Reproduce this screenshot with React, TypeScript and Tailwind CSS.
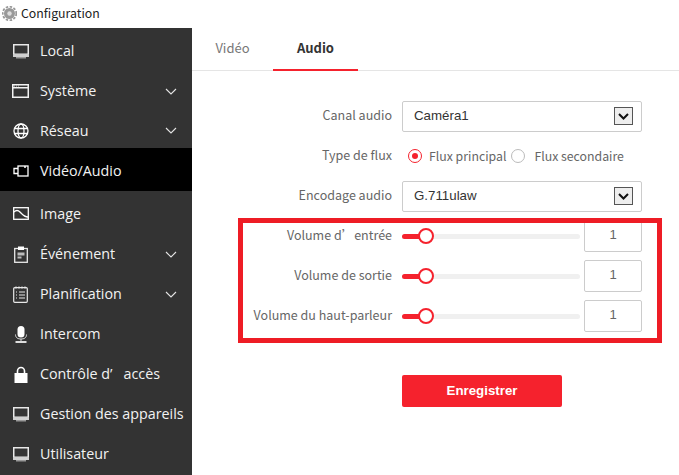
import { type ReactNode } from "react";

const RED = "#f5222d";

function Monitor() {
  return (
    <svg width="16" height="15" viewBox="0 0 16 15">
      <rect x="0.75" y="0.75" width="14.5" height="9.5" fill="none" stroke="#e8e8e8" strokeWidth="1.5" />
      <rect x="0" y="10" width="16" height="3" fill="#cfcfcf" />
      <rect x="3" y="13" width="10" height="1.5" fill="#999" />
    </svg>
  );
}

function Windowed() {
  return (
    <svg width="17" height="14" viewBox="0 0 17 14">
      <rect x="0.75" y="0.75" width="15.5" height="12.5" fill="none" stroke="#f2f2f2" strokeWidth="1.5" />
      <rect x="1" y="3" width="15" height="1.5" fill="#f2f2f2" />
      <path d="M2 2h6" stroke="#ccc" strokeWidth="1" strokeDasharray="1 1" />
    </svg>
  );
}

function Globe() {
  return (
    <svg width="16" height="16" viewBox="0 0 16 16" fill="none" stroke="#fff" strokeWidth="1.3">
      <circle cx="8" cy="8" r="7" />
      <ellipse cx="8" cy="8" rx="3" ry="7" />
      <path d="M1 5.500h14M1 10.500h14" />
    </svg>
  );
}

function Camera() {
  return (
    <svg width="16" height="12" viewBox="0 0 16 12" fill="none" stroke="#fff" strokeWidth="1.300">
      <rect x="5" y="1" width="10" height="10" />
      <path d="M5 3.500H1v5h4" />
      <path d="M12 1v2" strokeWidth="1.500" />
    </svg>
  );
}

function Picture() {
  return (
    <svg width="16" height="13" viewBox="0 0 16 13" fill="none" stroke="#fff" strokeWidth="1.3">
      <rect x="0.7" y="0.7" width="14.6" height="11.600" />
      <path d="M1 5c2-2 4-2 6 0s4 5 8 5" />
    </svg>
  );
}

function Clipboard() {
  return (
    <svg width="14" height="17" viewBox="0 0 14 17" fill="none" stroke="#e8e8e8" strokeWidth="1.300">
      <rect x="0.700" y="2.500" width="12.600" height="13.800" />
      <rect x="4" y="0.500" width="6" height="3.500" fill="#fff" stroke="none" />
      <rect x="3.500" y="6.500" width="7" height="3" fill="#bbb" stroke="none" />
      <rect x="3.500" y="10.500" width="4" height="2" fill="#bbb" stroke="none" />
    </svg>
  );
}

function Schedule() {
  return (
    <svg width="15" height="17" viewBox="0 0 15 17" fill="none" stroke="#e8e8e8" strokeWidth="1.200">
      <rect x="0.700" y="1.700" width="13.600" height="14.600" rx="1" />
      <path d="M3 0.500v2M6 0.500v2M9 0.500v2M12 0.500v2M3 6h1M3 9h1M3 12h1M6 6h6M6 9h6M6 12h6" />
    </svg>
  );
}

function Mic() {
  return (
    <svg width="14" height="17" viewBox="0 0 14 17" fill="none">
      <rect x="3.500" y="0" width="7" height="11.500" rx="3.500" fill="#fff" />
      <path d="M1.500 8.500c0 3.500 2.500 4.500 5.500 4.500s5.500-1 5.500-4.500" stroke="#ddd" strokeWidth="1" />
      <rect x="1.500" y="15" width="11" height="2" fill="#ddd" />
      <rect x="6.500" y="13" width="1" height="2" fill="#ddd" />
    </svg>
  );
}

function Lock() {
  return (
    <svg width="14" height="17" viewBox="0 0 14 17" fill="none">
      <path d="M3.500 8V5a3.500 3.500 0 0 1 7 0v3" stroke="#fff" strokeWidth="1.600" />
      <rect x="0.500" y="7" width="13" height="10" fill="#fff" />
    </svg>
  );
}

function Chevron() {
  return (
    <svg width="12" height="7" viewBox="0 0 12 7" fill="none" stroke="#e5e5e5" strokeWidth="1.100">
      <path d="M1 1l5 5 5-5" />
    </svg>
  );
}

function Gear() {
  return (
    <svg width="15" height="15" viewBox="0 0 15 15">
      <circle cx="7.500" cy="7.500" r="5.500" fill="#999" />
      <circle cx="7.500" cy="7.500" r="6.800" fill="none" stroke="#999" strokeWidth="1.800" strokeDasharray="2.500 1.500" />
      <circle cx="7.500" cy="7.500" r="2.200" fill="#ddd" />
    </svg>
  );
}

const MENU: { label: string; icon: ReactNode; row: string; more?: boolean }[] = [
  { label: "Local", icon: <Monitor />, row: "h-10" },
  { label: "Système", icon: <Windowed />, row: "h-10", more: true },
  { label: "Réseau", icon: <Globe />, row: "h-[37px] pt-[2px]", more: true },
  { label: "Vidéo/Audio", icon: <Camera />, row: "h-[43px] pt-[2px] bg-black" },
  { label: "Image", icon: <Picture />, row: "h-[43px] pt-[2px]" },
  { label: "Événement", icon: <Clipboard />, row: "h-10", more: true },
  { label: "Planification", icon: <Schedule />, row: "h-10", more: true },
  { label: "Intercom", icon: <Mic />, row: "h-10" },
  { label: "Contrôle d’\u00a0\u00a0\u00a0accès", icon: <Lock />, row: "h-10" },
  { label: "Gestion des appareils", icon: <Monitor />, row: "h-10" },
  { label: "Utilisateur", icon: <Monitor />, row: "h-10" },
];

function Row({ label, children }: { label: string; children: ReactNode }) {
  return (
    <div className="flex h-10 items-center">
      <div className="w-[200px] whitespace-nowrap pb-[1px] text-right text-[12.500px] text-[#666]">{label}</div>
      <div className="ml-[10px] flex items-center">{children}</div>
    </div>
  );
}

function Select({ value }: { value: string }) {
  return (
    <div className="flex h-[31px] w-[240px] items-center justify-between rounded-[2px] border border-[#ccc] pl-[11px] pr-[8px] font-['Liberation_Sans',sans-serif] text-[13.300px] text-[#333]">
      {value}
      <span className="flex h-[18px] w-[19px] items-center justify-center border border-[#555] bg-[#eee]">
        <svg width="11" height="7" viewBox="0 0 11 7" fill="none" stroke="#111" strokeWidth="2">
          <path d="M1 1l4.500 4.500L10 1" />
        </svg>
      </span>
    </div>
  );
}

function Volume({ label }: { label: string }) {
  return (
    <Row label={label}>
      <div className="relative h-[5px] w-[178px] rounded-full bg-[#f0f0f0]">
        <div className="h-[5px] w-[24px] rounded-full bg-[#f5222d]" />
        <div className="absolute left-[16px] top-[-6px] h-4 w-4 rounded-full border-[2px] border-[#f5222d] bg-white" />
      </div>
      <div className="ml-[4px] flex h-[32px] w-[58px] items-center justify-center rounded-[2px] border border-[#ccc] pb-[2px] font-['Liberation_Sans',sans-serif] text-[13px] text-[#666]">
        1
      </div>
    </Row>
  );
}

export default function App() {
  return (
    <div className="relative h-[475px] w-[679px] overflow-hidden bg-white font-['Noto_Sans_CJK_SC','Noto_Sans',sans-serif]">
      <div className="flex h-7 items-center gap-[4px] pb-[2px] pl-[2px] text-[12.300px] text-[#222]">
        <Gear />
        Configuration
      </div>
      <div className="flex h-[447px]">
        <nav className="w-[192px] shrink-0 bg-[#333] pt-[3px] font-['Open_Sans',sans-serif] text-[14.300px] text-[#f2f2f2]">
          {MENU.map((item) => (
            <div key={item.label} className={`flex items-center ${item.row}`}>
              <span className="flex w-[40px] shrink-0 justify-center pl-[1px]">{item.icon}</span>
              <span className="whitespace-nowrap">{item.label}</span>
              {item.more && (
                <span className="ml-auto mr-[15px]">
                  <Chevron />
                </span>
              )}
            </div>
          ))}
        </nav>
        <main className="flex-1">
          <div className="flex h-[43px] border-b border-[#e5e5e5] text-[13px]">
            <div className="flex w-[81px] items-center justify-center pb-[3px] text-[#777]">Vidéo</div>
            <div className="relative flex w-[85px] items-center justify-center pb-[3px] font-bold text-[#333]">
              Audio
              <div className="absolute inset-x-0 bottom-[-1px] h-[2px] bg-[#f5222d]" />
            </div>
          </div>
          <div className="mt-[25px]">
            <Row label="Canal audio">
              <Select value="Caméra1" />
            </Row>
            <Row label="Type de flux">
              <span className="ml-[6px] flex h-[14px] w-[14px] items-center justify-center rounded-full border border-[#f5222d]">
                <span className="h-[6px] w-[6px] rounded-full bg-[#f5222d]" />
              </span>
              <span className="ml-[7px] text-[12.300px] text-[#666]">Flux principal</span>
              <span className="ml-[5px] h-[14px] w-[14px] rounded-full border border-[#bbb]" />
              <span className="ml-[9px] text-[12.300px] text-[#666]">Flux secondaire</span>
            </Row>
            <Row label="Encodage audio">
              <Select value="G.711ulaw" />
            </Row>
            <Volume label="Volume d’entrée" />
            <Volume label="Volume de sortie" />
            <Volume label="Volume du haut-parleur" />
          </div>
          <button
            className="ml-[210px] mt-[39px] block h-8 w-40 rounded-[2px] font-['Liberation_Sans',sans-serif] text-[13.300px] font-bold text-white"
            style={{ background: RED }}
          >
            Enregistrer
          </button>
        </main>
      </div>
      {/* annotation box drawn over the form */}
      <div className="absolute left-[238px] top-[218px] h-[125px] w-[424px] border-[5px] border-[#ee1c25]" />
    </div>
  );
}
